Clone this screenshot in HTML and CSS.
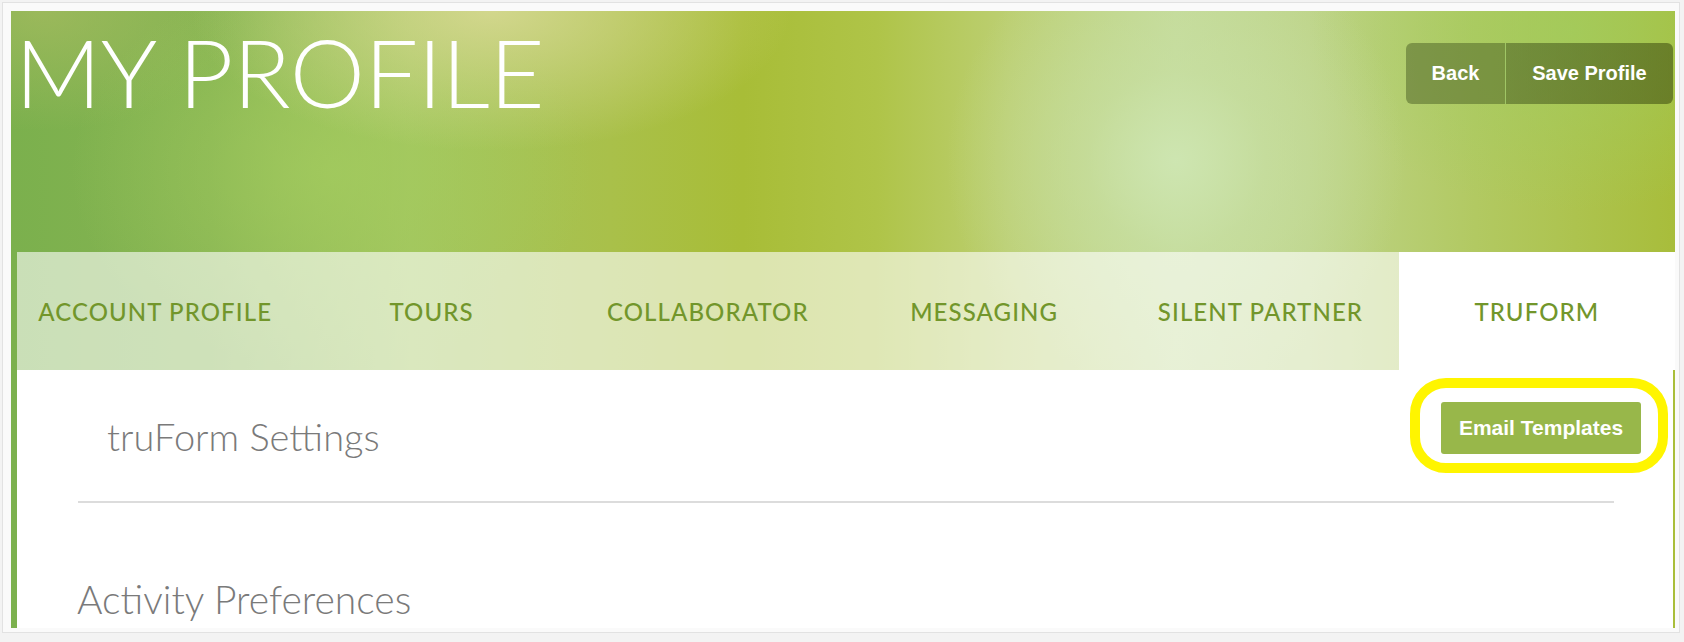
FILE: index.html
```html
<!DOCTYPE html>
<html lang="en">
<head>
<meta charset="utf-8">
<title>My Profile</title>
<link rel="stylesheet" href="styles.css">
</head>
<body>
<div class="frame">
  <div class="panel">
    <div class="hero">
      <div class="hero-top">
        <h1 class="page-title">MY PROFILE</h1>
        <div class="btn-group">
          <button class="hbtn hbtn-back">Back</button>
          <button class="hbtn hbtn-save">Save Profile</button>
        </div>
      </div>
      <nav class="tabs">
        <a class="tab">ACCOUNT PROFILE</a>
        <a class="tab">TOURS</a>
        <a class="tab">COLLABORATOR</a>
        <a class="tab">MESSAGING</a>
        <a class="tab">SILENT PARTNER</a>
        <a class="tab tab-active">TRUFORM</a>
      </nav>
    </div>
    <section class="content">
      <div class="section-head">
        <h2 class="section-title">truForm Settings</h2>
        <div class="highlight-wrap">
          <button class="email-btn">Email Templates</button>
          <span class="ring"></span>
        </div>
      </div>
      <hr class="divider">
      <h2 class="sub-title">Activity Preferences</h2>
    </section>
  </div>
</div>
</body>
</html>
```

FILE: styles.css
```css
html, body {
  margin: 0;
  padding: 0;
  background: #f3f3f3;
}
body {
  width: 1684px;
  height: 642px;
  overflow: hidden;
  font-family: "Lato", "Liberation Sans", sans-serif;
}
.frame {
  margin: 2px 0 0 2px;
  width: 1678px;
  height: 631px;
  box-sizing: border-box;
  border: 1px solid #e2e2e2;
  background: #fafafa;
  padding: 8px 6px 5px 8px;
}
.panel {
  width: 1664px;
  height: 617px;
  overflow: hidden;
  display: flex;
  flex-direction: column;
}
.hero {
  background:
    radial-gradient(circle at 1165px 150px, rgba(206, 230, 178, 0.95) 0px, rgba(200, 224, 165, 0.6) 90px, rgba(195, 220, 150, 0) 230px),
    radial-gradient(ellipse 300px 140px at 480px 0px, rgba(218, 218, 150, 0.85), rgba(218, 218, 150, 0)),
    radial-gradient(ellipse 260px 200px at 320px 160px, rgba(165, 205, 95, 0.7), rgba(165, 205, 95, 0)),
    radial-gradient(ellipse 260px 180px at 1560px 20px, rgba(160, 205, 95, 0.7), rgba(160, 205, 95, 0)),
    radial-gradient(ellipse 200px 120px at 30px 0px, rgba(175, 190, 100, 0.6), rgba(175, 190, 100, 0)),
    linear-gradient(90deg, #7bb04d 0%, #86b452 12%, #a2c55e 24%, #a9c04a 36%, #a8bd37 44%, #afc448 52%, #bccf72 60%, #c4da98 70%, #bed489 78%, #b2c962 88%, #a8bd3b 100%);
  display: flex;
  flex-direction: column;
}
.hero-top {
  height: 241px;
  display: flex;
  justify-content: space-between;
  align-items: flex-start;
}
.page-title {
  margin: 5px 0 0 4px;
  font-family: "Lato", sans-serif;
  font-weight: 300;
  font-size: 95px;
  line-height: 110px;
  color: #ffffff;
  letter-spacing: -0.5px;
}
.btn-group {
  margin: 32px 2px 0 0;
  display: flex;
  border-radius: 6px;
  overflow: hidden;
}
.hbtn {
  height: 61px;
  border: 0;
  margin: 0;
  font-family: "Liberation Sans", Arial, sans-serif;
  font-weight: 700;
  font-size: 20px;
  color: #ffffff;
  background: rgba(62, 82, 28, 0.45);
  padding: 0;
}
.hbtn-back {
  width: 100px;
  border-right: 1px solid rgba(170, 210, 110, 0.8);
}
.hbtn-save {
  width: 167px;
  background: linear-gradient(90deg, rgba(62, 82, 28, 0.5), rgba(70, 86, 20, 0.62));
}
.tabs {
  height: 118px;
  margin-left: 6px;
  display: flex;
}
.tab {
  flex: 1 1 0;
  display: flex;
  align-items: center;
  justify-content: center;
  background: rgba(255, 255, 255, 0.6);
  font-family: "Lato", sans-serif;
  font-weight: 500;
  font-size: 24px;
  letter-spacing: 1.1px;
  color: #72962b;
}
.tab-active {
  background: #ffffff;
}
.content {
  flex: 1;
  background: #ffffff;
  border-left: 6px solid #7cb14e;
  border-right: 2px solid #a9be3b;
  padding: 32px 0 0 0;
  display: flex;
  flex-direction: column;
}
.section-head {
  height: 52px;
  display: flex;
  align-items: center;
  justify-content: space-between;
  padding: 0 32px 0 90px;
}
.section-title {
  margin: 16px 0 0 0;
  font-family: "Lato", sans-serif;
  font-weight: 300;
  font-size: 38px;
  color: #7a7a7a;
}
.highlight-wrap {
  position: relative;
  display: flex;
}
.email-btn {
  width: 200px;
  height: 52px;
  border: 0;
  border-radius: 3px;
  background: #98b74a;
  color: #ffffff;
  font-family: "Liberation Sans", Arial, sans-serif;
  font-weight: 700;
  font-size: 21px;
  padding: 0;
}
.ring {
  position: absolute;
  left: -31px;
  right: -27px;
  top: -24px;
  bottom: -19px;
  border: 10px solid #fff500;
  border-radius: 36px;
  pointer-events: none;
}
.divider {
  margin: 47px 59px 0 61px;
  border: 0;
  height: 2px;
  background: #dcdcdc;
}
.sub-title {
  margin: 73px 0 0 60px;
  font-family: "Lato", sans-serif;
  font-weight: 300;
  font-size: 39px;
  line-height: 46px;
  color: #7a7a7a;
}
```
